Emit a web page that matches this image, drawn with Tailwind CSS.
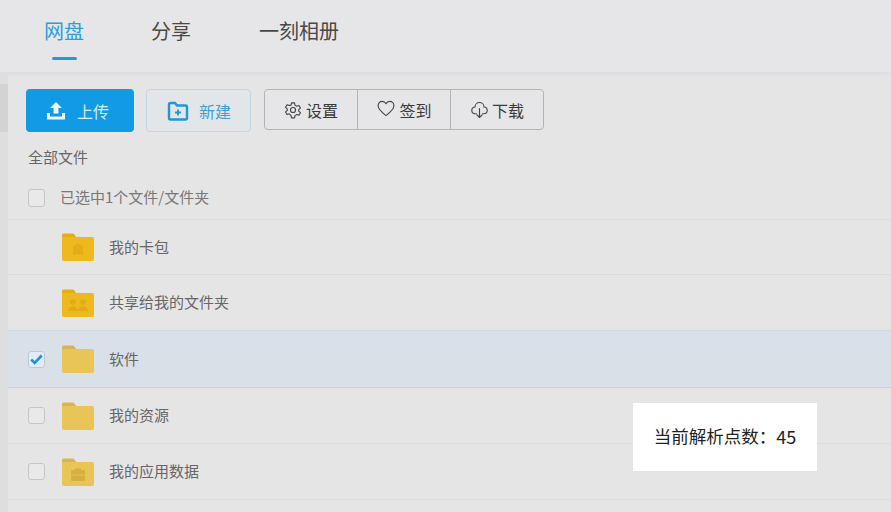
<!DOCTYPE html>
<html lang="en">
<head>
  <meta charset="UTF-8" />
  <title>网盘</title>
  <script src="https://cdn.jsdelivr.net/npm/@tailwindcss/browser@4"></script>
</head>
<body class="relative h-[512px] w-[891px] overflow-hidden bg-[#e5e5e6] font-['Noto_Sans_CJK_SC','Noto_Sans',sans-serif]">

<!-- Top tabs -->
<header class="flex h-[72px] items-start bg-[#e6e6e8] pl-[44px] text-[20px] text-[#484848] shadow-[0_1px_6px_rgba(0,0,0,0.06)]">
  <div class="mr-[67px] flex h-[60px] flex-col items-center pt-[16px]">
    <span class="h-[28px] leading-[30px] text-[#2c9fd8]">网盘</span>
    <span class="mt-[13px] h-[3px] w-[25px] rounded-full bg-[#1f9bdc]"></span>
  </div>
  <div class="mr-[68px] pt-[16px] leading-[30px]">分享</div>
  <div class="pt-[16px] leading-[30px]">一刻相册</div>
</header>

<div class="flex h-[440px]">
  <!-- Left strip -->
  <aside class="w-[8px] shrink-0 bg-[#dedede] pt-[12px]">
    <div class="h-[48px] bg-[#d3d3d3]"></div>
  </aside>

  <main class="flex-1">
    <!-- Toolbar -->
    <div class="flex h-[60px] items-start gap-[12px] pl-[18px] pt-[17px]">
      <button class="flex h-[43px] w-[108px] items-center gap-[11px] rounded-[4px] bg-[#119be4] pl-[20px] text-[16px] text-[#d8eaf6]">
        <svg width="20" height="20" viewBox="0 0 20 20" fill="#f0f6fa"><path d="M10 1l6 6h-3.600v5.500H7.600V7H4zM1 12h3v3.600h12V12h3v6.500H1z"/></svg>
        上传
      </button>
      <button class="flex h-[43px] w-[105px] items-center gap-[10px] rounded-[4px] border border-[#c2d6e2] bg-[#e2e6e9] pl-[20px] text-[16px] text-[#3a9fd8]">
        <svg width="22" height="22" viewBox="0 0 22 22" fill="none" stroke="#2097d8" stroke-width="2.400"><path d="M2 4.500a1.500 1.500 0 0 1 1.500-1.500H8l2 2.500h8.500a1.500 1.500 0 0 1 1.500 1.500v11a1.500 1.500 0 0 1-1.500 1.500h-15A1.500 1.500 0 0 1 2 18z"/><path stroke-width="1.800" d="M11 9.500v6M8 12.500h6"/></svg>
        新建
      </button>
      <div class="ml-[1px] flex h-[41px] items-stretch rounded-[4px] border border-[#b4b4b6] bg-[#e6e6e8] text-[16px] text-[#3a3a3a]">
        <div class="flex w-[93px] items-center justify-center gap-[4px] border-r border-[#b4b4b6]">
          <svg width="18" height="18" viewBox="0 0 24 24" fill="none" stroke="#444" stroke-width="1.500" stroke-linejoin="round"><path d="M10 2.500h4l.6 3 2.400 1.400 2.900-1 2 3.500-2.300 2v2.200l2.300 2-2 3.500-2.900-1-2.400 1.400-.6 3h-4l-.6-3L7 17.100l-2.900 1-2-3.500 2.300-2v-2.200l-2.300-2 2-3.500 2.900 1L9.400 5.500z"/><circle cx="12" cy="12" r="3.400"/></svg>
          设置
        </div>
        <div class="flex w-[93px] items-center justify-center gap-[3px] border-r border-[#b4b4b6]">
          <svg class="-mt-[2px]" width="20" height="19" viewBox="0 0 24 24" fill="none" stroke="#444" stroke-width="1.400" stroke-linejoin="round"><path d="M12 21C6 16.500 2 13 2 8.300 2 5.200 4.400 3 7.200 3c2 0 3.800 1 4.800 3 1-2 2.800-3 4.800-3C19.600 3 22 5.200 22 8.300 22 13 18 16.500 12 21z"/></svg>
          签到
        </div>
        <div class="flex w-[92px] items-center justify-center gap-[3px]">
          <svg width="19" height="18" viewBox="0 0 24 24" fill="none" stroke="#444" stroke-width="1.500" stroke-linecap="round" stroke-linejoin="round"><path d="M8 17H6.500A4.500 4.500 0 0 1 6 8a6 6 0 0 1 12 0 4.500 4.500 0 0 1-.5 9H16"/><path d="M12 10v12M8.500 18.500L12 22l3.500-3.500"/></svg>
          下载
        </div>
      </div>
    </div>

    <!-- Breadcrumb -->
    <div class="h-[46px] pl-[20px] pt-[15px] text-[15px] leading-[20px] text-[#666]">全部文件</div>

    <!-- File list -->
    <div class="flex h-[42px] items-center border-b border-[#dcdcdc] pb-[2px] pl-[20px] text-[15px] text-[#777]">
      <span class="mr-[15px] h-[18px] w-[17px] rounded-[3px] border border-[#c6c6c6] bg-[#e9e9ea]"></span>
      已选中1个文件/文件夹
    </div>

    <div class="flex h-[55px] items-center border-b border-[#dcdcdc] pl-[54px] text-[15px] text-[#666]">
      <svg class="mr-[15px]" width="32" height="28" viewBox="0 0 32 28"><path fill="#e3ae12" d="M0 2a1.500 1.500 0 0 1 1.500-1.500h10L15 5H0z"/><rect y="4" width="32" height="24" rx="2" fill="#eeb91d"/><path fill="#e2ad17" d="M11 13.500l5-3.500 5 3.500v8H11z"/></svg>
      我的卡包
    </div>
    <div class="flex h-[56px] items-center border-b border-[#cdd6e0] pl-[54px] text-[15px] text-[#666]">
      <svg class="mr-[15px]" width="32" height="28" viewBox="0 0 32 28"><path fill="#e3ae12" d="M0 2a1.500 1.500 0 0 1 1.500-1.500h10L15 5H0z"/><rect y="4" width="32" height="24" rx="2" fill="#eeb91d"/><g fill="#dfab18"><circle cx="11" cy="13" r="2.800"/><circle cx="21" cy="13" r="2.800"/><path d="M6 22c0-3 2-4.500 5-4.500s5 1.500 5 4.500zM16 22c0-3 2-4.500 5-4.500s5 1.500 5 4.500z"/></g></svg>
      共享给我的文件夹
    </div>
    <div class="flex h-[57px] items-center border-b border-[#c6d4e3] bg-[#dae0e7] pl-[20px] text-[15px] text-[#666]">
      <span class="mr-[17px] flex h-[17px] w-[17px] items-center justify-center rounded-[3px] border border-[#c2c8cf] bg-[#e4ecf3]">
        <svg width="13" height="11" viewBox="0 0 13 11" fill="none" stroke="#1b93dc" stroke-width="2.600"><path d="M1.200 5.500l3.500 3.500 7-7.500"/></svg>
      </span>
      <svg class="mr-[15px]" width="32" height="28" viewBox="0 0 32 28"><path fill="#d8b554" d="M0 2a1.500 1.500 0 0 1 1.500-1.500h10L15 5H0z"/><rect y="4" width="32" height="24" rx="2" fill="#e9c457"/></svg>
      软件
    </div>
    <div class="flex h-[56px] items-center border-b border-[#dcdcdc] pl-[20px] text-[15px] text-[#666]">
      <span class="mr-[17px] h-[17px] w-[17px] rounded-[3px] border border-[#c6c6c6] bg-[#e9e9ea]"></span>
      <svg class="mr-[15px]" width="32" height="28" viewBox="0 0 32 28"><path fill="#d8b554" d="M0 2a1.500 1.500 0 0 1 1.500-1.500h10L15 5H0z"/><rect y="4" width="32" height="24" rx="2" fill="#e9c457"/></svg>
      我的资源
    </div>
    <div class="flex h-[56px] items-center border-b border-[#dcdcdc] pl-[20px] text-[15px] text-[#666]">
      <span class="mr-[17px] h-[17px] w-[17px] rounded-[3px] border border-[#c6c6c6] bg-[#e9e9ea]"></span>
      <svg class="mr-[15px]" width="32" height="28" viewBox="0 0 32 28"><path fill="#d8b554" d="M0 2a1.500 1.500 0 0 1 1.500-1.500h10L15 5H0z"/><rect y="4" width="32" height="24" rx="2" fill="#e9c457"/><path fill="#d9ae40" d="M9 13a1 1 0 0 1 1-1h3v-1.500h6V12h3a1 1 0 0 1 1 1v3.500H9zM9 17.500h14V22a1 1 0 0 1-1 1H10a1 1 0 0 1-1-1z"/></svg>
      我的应用数据
    </div>
  </main>
</div>

<!-- Overlay notice -->
<div class="absolute left-[633px] top-[403px] flex h-[68px] w-[184px] items-center justify-center whitespace-nowrap bg-white pb-[1px] text-[17.500px] text-[#222]">当前解析点数：<span class="text-[18px]">45</span></div>

</body>
</html>
